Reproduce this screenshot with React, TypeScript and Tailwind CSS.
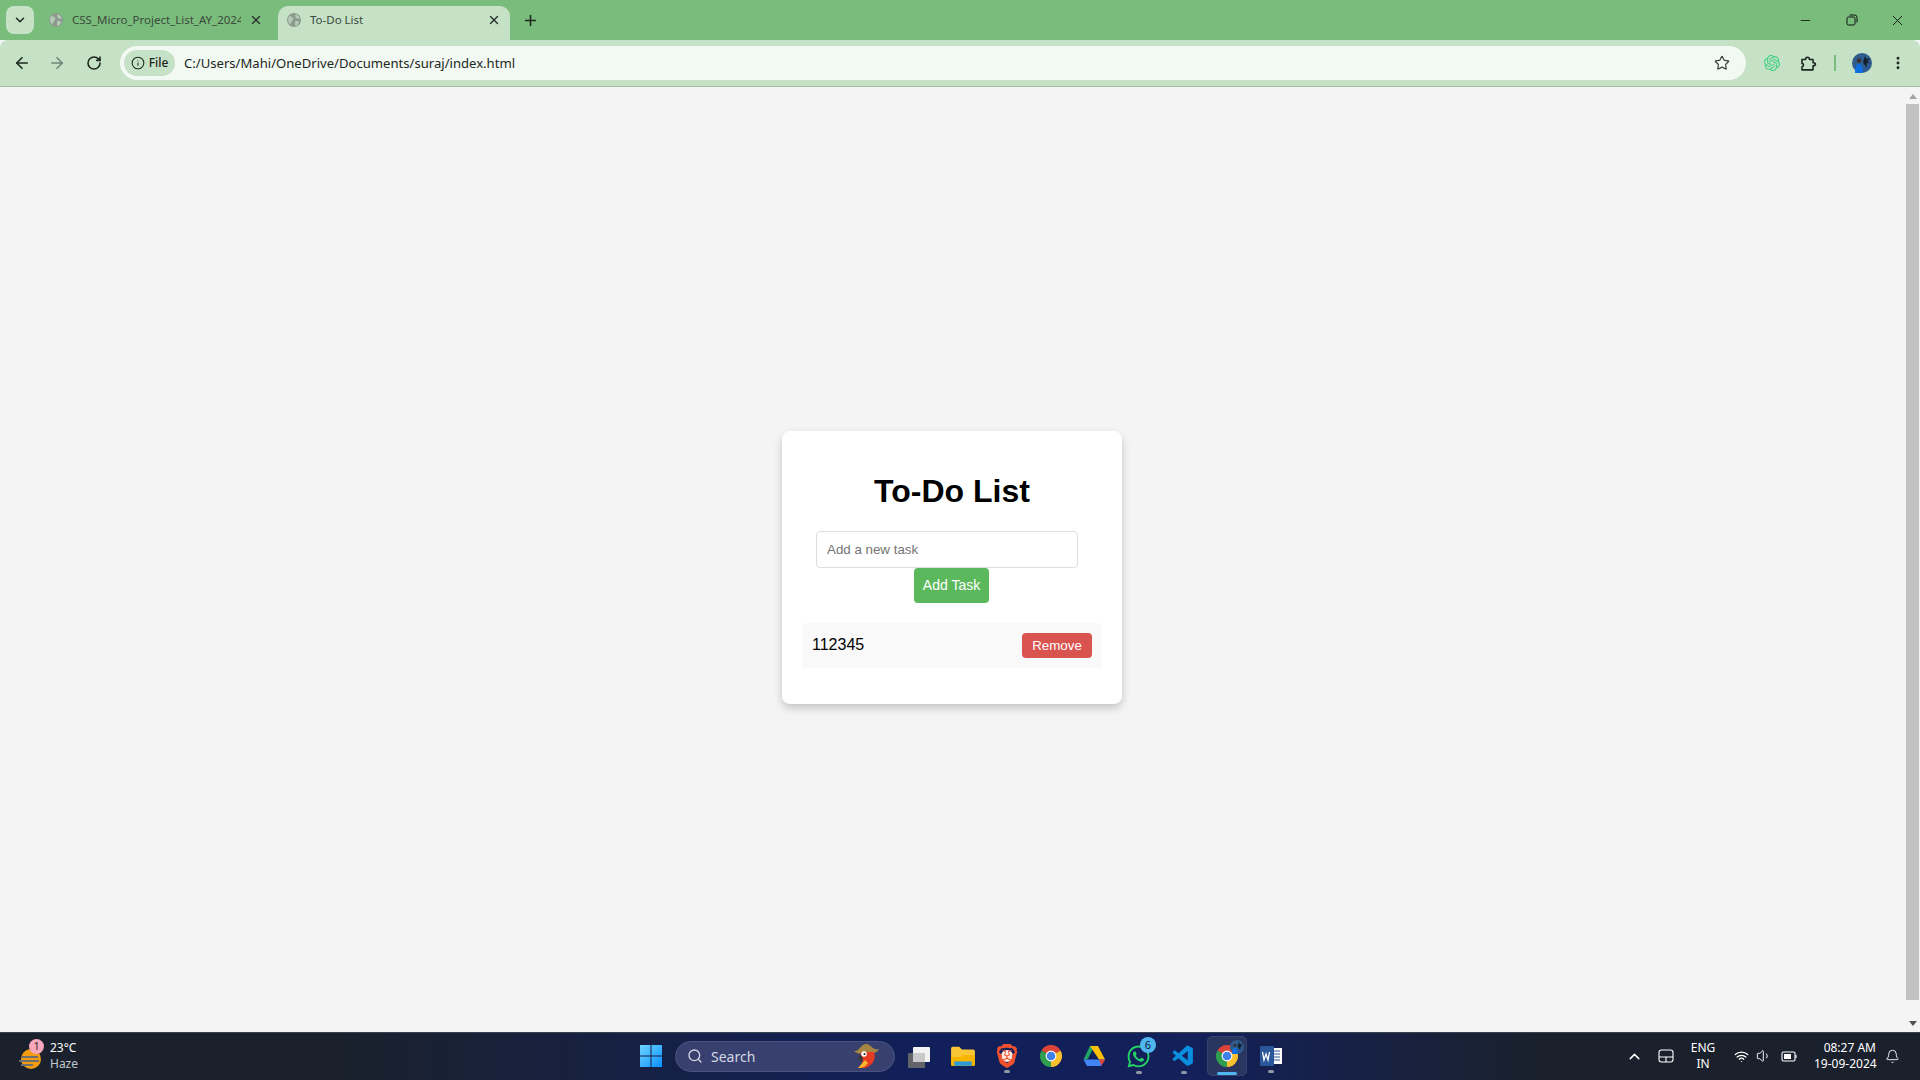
import { ArrowLeft, ArrowRight, RotateCw, Info, Star, EllipsisVertical, Minus, X, Plus, ChevronDown, ChevronUp, Search, Bell, Wifi, Volume1 } from "lucide-react";
import { SiOpenai, SiBrave } from "react-icons/si";
import { FaWhatsapp } from "react-icons/fa";
import { VscVscode } from "react-icons/vsc";

const Globe = ({ className }: { className: string }) => (
  <svg viewBox="0 0 16 16" className={className}>
    <circle cx="8" cy="8" r="7" fill="#8d9a90" />
    <path d="M3 4c2 0 3 1 4 2s0 2-1 3-1 3-2 3-2-3-2-5zM10 2c1 1 3 2 4 4-1 1-3 1-4 0s-1-3 0-4zM10 9c2 0 3 0 3 1s-2 4-3 4-1-2-1-3 0-2 1-2z" fill="#b5c9b7" />
  </svg>
);

const Avatar = ({ className }: { className: string }) => (
  <svg viewBox="0 0 20 20" className={className}>
    <circle cx="10" cy="10" r="10" fill="#2f5c8f" />
    <path d="M11 9l2-6 1.500 3 3.500-1-2.500 3.500 3 2-4-.5.500 5-3-4z" fill="#14202e" />
    <circle cx="7" cy="7.500" r="2.200" fill="#3b2f2a" />
    <path d="M3 20c0-7 1.500-9 4-9s4 2 4 9z" fill="#0f6fe0" />
  </svg>
);

const Chrome = ({ className }: { className: string }) => (
  <svg viewBox="0 0 24 24" className={className}>
    <path d="M12 12L2.470 6.500A11 11 0 0 1 21.530 6.500z" fill="#db4437" />
    <path d="M12 12L12 23A11 11 0 0 1 2.470 6.500z" fill="#2f9e4f" />
    <path d="M12 12L21.530 6.500A11 11 0 0 1 12 23z" fill="#fbc02d" />
    <circle cx="12" cy="12" r="5.400" fill="#fff" />
    <circle cx="12" cy="12" r="4.300" fill="#3f7fe8" />
  </svg>
);

const Drive = () => (
  <svg viewBox="0 0 24 24" className="w-[24px] h-[24px]">
    <polygon points="8,2 12.500,2 5.500,15.500 1.500,15.500" fill="#1fa463" />
    <polygon points="8,2 16,2 23,15.500 17,15.500" fill="#ffc107" />
    <polygon points="5.500,15.500 23,15.500 19,22 5,22 1.500,15.500" fill="#4285f4" />
    <polygon points="17,15.500 23,15.500 19.500,21.500" fill="#ea4335" />
  </svg>
);

const Folder = () => (
  <svg viewBox="0 0 24 24" className="w-[26px] h-[26px]">
    <path d="M1 5a1.500 1.500 0 0 1 1.500-1.500h6l2.500 2.500h10.500A1.500 1.500 0 0 1 23 7.500V20a1 1 0 0 1-1 1H2a1 1 0 0 1-1-1z" fill="#fbc636" />
    <path d="M1 13h9l2-2h11v9a1 1 0 0 1-1 1H2a1 1 0 0 1-1-1z" fill="#f7b500" />
    <rect x="4" y="17" width="16" height="4" fill="#2b9ad8" />
  </svg>
);

const Word = () => (
  <svg viewBox="0 0 24 24" className="w-[24px] h-[24px]">
    <rect x="9" y="4" width="14" height="16" fill="#fff" />
    <path d="M13 7h8M13 10h8M13 13h8M13 16h8" stroke="#2b579a" strokeWidth="1.200" />
    <rect x="1" y="2" width="14" height="20" rx="1" fill="#2b579a" />
    <path d="M3.500 8l1.500 8 2-6 2 6 1.500-8" fill="none" stroke="#fff" strokeWidth="1.300" />
  </svg>
);

const Parrot = () => (
  <svg viewBox="0 0 28 28" className="w-[28px] h-[28px]">
    <path d="M1 9c5 1 7-7 12-7s7 7 13 5c-2 4-6 5-12 5S4 12 1 9z" fill="#a68640" />
    <path d="M8 10h13c2 6 0 13-9 16H5c3-3 5-6 5-9-2-2-3-4-2-7z" fill="#e63a22" />
    <path d="M5 26c3-3 5-6 7-8l3 3c-2 3-5 5-10 5z" fill="#f8b62c" />
    <circle cx="11" cy="12" r="2.800" fill="#fff" />
    <circle cx="11.500" cy="12" r="1" fill="#222" />
    <path d="M6 13c3 0 4 2 3 6-3 0-4-2-3-6z" fill="#3a3a3a" />
  </svg>
);

const Weather = () => (
  <div className="relative w-[26px] h-[30px] shrink-0">
    <svg viewBox="0 0 26 26" className="w-[26px] h-[26px] mt-[5px]">
      <circle cx="13" cy="13" r="10" fill="#f39c12" />
      <path d="M4 11h16M1 15h20M3 19h12" stroke="#6f6f6f" strokeWidth="2" />
    </svg>
    <span className="absolute left-[11px] -top-[2px] w-[15px] h-[15px] rounded-full bg-[#f9a8bc] text-[#1a1a1a] text-[10px] leading-[15px] text-center">1</span>
  </div>
);

const Dot = () => <span className="absolute -bottom-[5px] left-1/2 -translate-x-1/2 w-[6px] h-[3px] rounded-full bg-[#8f97a5]" />;

const Tab = ({ title, active }: { title: string; active?: boolean }) => (
  <div className={active ? "w-[232px] h-[34px] flex items-center pl-[8px] pr-[9px] pb-[6px] rounded-t-[10px] bg-[#c5e1c6]" : "w-[232px] h-[34px] flex items-center pl-[8px] pr-[9px] pb-[6px]"}>
    <Globe className="w-[16px] h-[16px] shrink-0" />
    <span className="ml-[8px] flex-1 text-[11.5px] text-[#3a4a3c] whitespace-nowrap overflow-hidden">{title}</span>
    <X size={14} strokeWidth={2.4} className="ml-[8px] shrink-0 text-[#2b332c]" />
  </div>
);

const App = () => {
  return (
    <div className="h-screen flex flex-col overflow-hidden bg-[#f4f4f4] font-['Noto_Sans',sans-serif]">
      <div className="h-[40px] bg-[#7abc7c] flex items-end">
        <div className="w-[28px] h-[28px] ml-[6px] mb-[6px] rounded-[8px] bg-[#c5e1c6] flex items-center justify-center">
          <ChevronDown size={14} strokeWidth={2.6} className="text-[#1f2a20]" />
        </div>
        <div className="ml-[6px] mr-[6px]">
          <Tab title="CSS_Micro_Project_List_AY_2024" />
        </div>
        <Tab title="To-Do List" active />
        <Plus size={17} strokeWidth={2.2} className="ml-[12px] mb-[11px] text-[#1f2a20]" />
        <div className="flex-1" />
        <div className="h-[40px] flex items-center text-[#111] mr-[14px]">
          <Minus size={15} strokeWidth={1.3} />
          <svg viewBox="0 0 12 12" className="ml-[33px] w-[12px] h-[12px]" fill="none" stroke="#111" strokeWidth="1">
            <rect x="1" y="3" width="8" height="8" rx="1.500" />
            <path d="M3.500 1h5a2.500 2.500 0 0 1 2.500 2.500v5" />
          </svg>
          <X size={17} strokeWidth={1.3} className="ml-[31px]" />
        </div>
      </div>

      <div className="h-[47px] bg-[#c5e1c6] border-b border-b-[#a3bda4] rounded-t-[8px] flex items-center pl-[13px] pr-[13px]">
        <ArrowLeft size={18} strokeWidth={2.2} className="text-[#1d271e]" />
        <ArrowRight size={18} strokeWidth={2.2} className="ml-[17px] text-[#71867a]" />
        <RotateCw size={16} strokeWidth={2.4} className="ml-[20px] text-[#1d271e]" />
        <div className="ml-[18px] w-[1626px] h-[34px] rounded-full bg-[#f2f8f2] flex items-center pl-[4px] pr-[16px]">
          <div className="w-[51px] h-[26px] rounded-full bg-[#c5e1c6] flex items-center justify-center gap-[4px]">
            <Info size={14} strokeWidth={1.8} className="text-[#1d271e]" />
            <span className="text-[12px] font-medium text-[#1d271e]">File</span>
          </div>
          <span className="ml-[9px] mt-[1px] flex-1 text-[13.1px] text-[#1d271e] whitespace-nowrap">C:/Users/Mahi/OneDrive/Documents/suraj/index.html</span>
          <Star size={16} strokeWidth={1.8} className="text-[#3a433b]" />
        </div>
        <SiOpenai size={16} className="ml-[18px] text-[#3fcf7f]" />
        <svg viewBox="0 0 24 24" className="ml-[18px] w-[19px] h-[19px]" fill="none" stroke="#1d271e" strokeWidth="2" strokeLinejoin="round">
          <path d="M5 7h4.500c0-2 .5-3 2.500-3s2.500 1 2.500 3H19v4c2 0 3 .5 3 2s-1 2-3 2v5H5v-4c1.500 0 2-1 2-2s-.5-2-2-2z" />
        </svg>
        <span className="ml-[17px] w-[2px] h-[16px] bg-[#7abc7c]" />
        <Avatar className="ml-[16px] w-[20px] h-[20px]" />
        <EllipsisVertical size={16} strokeWidth={2.4} className="ml-[18px] text-[#1d271e]" />
      </div>

      <div className="flex-1 flex min-h-0">
        <main className="flex-1 flex items-center justify-center pt-4 pr-[1px] font-['Liberation_Sans',Arial,sans-serif]">
          <div className="w-[340px] p-5 bg-white rounded-lg shadow-[0_4px_8px_rgba(0,0,0,0.2)]">
            <h1 className="text-[32px] leading-[37px] font-bold text-black text-center mt-[22px] mb-[21px]">To-Do List</h1>
            <div className="flex flex-col items-center">
              <input readOnly placeholder="Add a new task" className="w-[262px] h-[37px] mr-[10px] px-[10px] border border-[#ddd] rounded-[4px] text-[13.33px] placeholder:text-[#757575] outline-none" />
              <button className="w-[75px] h-[35px] mr-[1px] rounded-[4px] bg-[#5cb85c] text-white text-[14px]">Add Task</button>
            </div>
            <ul className="mt-5 mb-4">
              <li className="h-[45px] pl-[10px] pr-[10px] flex items-center justify-between bg-[#f9f9f9] rounded-[4px] text-[16px] text-black">
                <span className="-mt-[2px]">112345</span>
                <button className="w-[70px] h-[25px] rounded-[4px] bg-[#d9534f] text-white text-[13.33px]">Remove</button>
              </li>
            </ul>
          </div>
        </main>
        <div className="w-[15px] flex flex-col items-center bg-[#f4f4f4]">
          <span className="mt-[7px] w-0 h-0 border-x-[4px] border-x-transparent border-b-[5px] border-b-[#a3a3a3]" />
          <span className="mt-[5px] w-[13px] h-[896px] bg-[#c1c1c1]" />
          <span className="mt-[21px] w-0 h-0 border-x-[4px] border-x-transparent border-t-[5px] border-t-[#505050]" />
        </div>
      </div>

      <div className="h-[48px] pb-[1px] border-t border-t-[#3a4150] flex items-center text-white bg-[linear-gradient(90deg,#1a212d_0%,#1a212d_18%,#11205a_48%,#13205a_62%,#1a212d_80%,#1a212d_100%)]">
        <div className="w-[639px] flex items-center pl-[18px]">
          <Weather />
          <div className="ml-[6px] text-[12px] leading-[16px]">
            <div>23°C</div>
            <div className="text-[#c3c7cf]">Haze</div>
          </div>
        </div>
        <svg viewBox="0 0 24 24" className="w-[24px] h-[24px] shrink-0">
          <defs>
            <linearGradient id="win" x1="0" y1="0" x2="1" y2="1">
              <stop offset="0" stopColor="#6fd4ff" />
              <stop offset="1" stopColor="#0a90ff" />
            </linearGradient>
          </defs>
          <path d="M1 1h10.500v10.500H1zM12.500 1H23v10.500H12.500zM1 12.500h10.500V23H1zM12.500 12.500H23V23H12.500z" fill="url(#win)" />
        </svg>
        <div className="ml-[12px] w-[220px] h-[31px] rounded-full bg-[#37406e] border border-[#4a5384] flex items-center pl-[11px] pr-[13px]">
          <Search size={16} strokeWidth={2} className="text-[#d4d8e6]" />
          <span className="ml-[8px] flex-1 text-[14px] text-[#d4d8e6]">Search</span>
          <Parrot />
        </div>
        <svg viewBox="0 0 24 24" className="ml-[12px] w-[24px] h-[24px] shrink-0">
          <rect x="6" y="3" width="17" height="15" rx="1" fill="#f2f2f2" />
          <rect x="1" y="9" width="17" height="15" rx="1" fill="#6b6b6b" fillOpacity="0.9" />
          <rect x="6" y="9" width="12" height="9" fill="#c9c9c9" />
        </svg>
        <div className="ml-[19px]"><Folder /></div>
        <div className="relative ml-[19px]">
          <span className="absolute inset-[6px] rounded-full bg-[#ffe6dc]" />
          <SiBrave size={24} className="relative text-[#f1502f]" />
          <Dot />
        </div>
        <div className="ml-[20px]"><Chrome className="w-[24px] h-[24px]" /></div>
        <div className="ml-[19px]"><Drive /></div>
        <div className="relative ml-[20px]">
          <FaWhatsapp size={25} className="text-[#25d366]" />
          <span className="absolute -right-[5px] -top-[7px] w-[16px] h-[16px] rounded-full bg-[#4fb6f0] text-[#10203a] text-[11px] leading-[16px] text-center">6</span>
          <Dot />
        </div>
        <div className="relative ml-[20px]"><VscVscode size={25} className="text-[#0a8fe0]" /><Dot /></div>
        <div className="relative ml-[11px] w-[40px] h-[40px] rounded-[5px] bg-[#2a3560] border border-[#364170] flex items-center justify-center">
          <Chrome className="w-[24px] h-[24px]" />
          <Avatar className="absolute right-[2px] top-[3px] w-[14px] h-[14px]" />
          <span className="absolute bottom-0 left-1/2 -translate-x-1/2 w-[20px] h-[3px] rounded-full bg-[#4fb6f0]" />
        </div>
        <div className="relative ml-[12px]"><Word /><Dot /></div>
        <div className="flex-1" />
        <ChevronUp size={17} strokeWidth={2} className="text-white" />
        <svg viewBox="0 0 16 14" className="ml-[15px] w-[16px] h-[14px]" fill="none" stroke="#fff" strokeWidth="1.100">
          <rect x="1" y="1" width="14" height="12" rx="2.500" />
          <path d="M1 8h14M8 8v5" />
        </svg>
        <div className="ml-[16px] w-[26px] text-[12px] leading-[16px] text-center whitespace-nowrap flex flex-col items-center">
          <span>ENG</span>
          <span>IN</span>
        </div>
        <Wifi size={15} strokeWidth={2} className="ml-[18px] text-white" />
        <Volume1 size={16} strokeWidth={1.4} className="ml-[7px] text-white" />
        <svg viewBox="0 0 16 14" className="ml-[9px] w-[16px] h-[14px]" fill="none" stroke="#fff" strokeWidth="1.100">
          <rect x="1" y="3" width="13" height="9" rx="1.500" />
          <rect x="3" y="5" width="7" height="5" fill="#fff" stroke="none" />
          <path d="M15 6v3" />
        </svg>
        <div className="ml-[17px] w-[62px] text-[12px] leading-[16px] text-right whitespace-nowrap">
          <div>08:27 AM</div>
          <div>19-09-2024</div>
        </div>
        <Bell size={15} strokeWidth={1.4} className="ml-[9px] mr-[20px] text-white" />
      </div>
    </div>
  );
};

export default App;
